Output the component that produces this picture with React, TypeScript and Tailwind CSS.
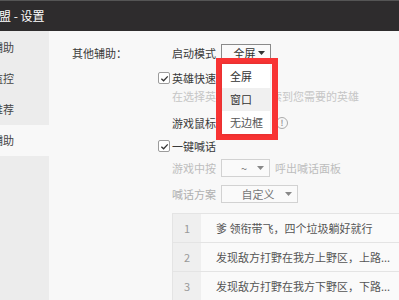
import React from 'react';

const font = { fontFamily: '"Noto Sans CJK SC", "Noto Sans", sans-serif' };

const navItems = [
  { label: '游戏辅助', active: false },
  { label: '战绩监控', active: false },
  { label: '英雄推荐', active: false },
  { label: '其他辅助', active: true },
];

const phrases = [
  '爹 领衔带飞，四个垃圾躺好就行',
  '发现敌方打野在我方上野区，上路...',
  '发现敌方打野在我方下野区，下路...',
];

function Check() {
  return (
    <span className="flex h-[12px] w-[12px] items-center justify-center rounded-[2px] border border-[#9c9c9c] bg-white">
      <svg width="9" height="9" viewBox="0 0 10 10">
        <path d="M1.5 5.2 L4 7.5 L8.6 2.6" fill="none" stroke="#333" strokeWidth="1.4" />
      </svg>
    </span>
  );
}

function Select({ value, width, strong }: { value: string; width: string; strong?: boolean }) {
  return (
    <div
      className={`flex h-[18px] items-center justify-between border bg-[#fafafa] pl-[9px] pr-[5px] ${width} ${
        strong ? 'border-[#8a8a8a] text-[#333]' : 'border-[#d2d2d2] text-[#777]'
      }`}
    >
      <span className="flex-1 text-center">{value}</span>
      <svg width="7" height="4" viewBox="0 0 7 4">
        <path d="M0 0 L7 0 L3.5 4 Z" fill={strong ? '#333' : '#888'} />
      </svg>
    </div>
  );
}

export default function App() {
  return (
    <div className="flex h-[300px] w-[399px] flex-col overflow-hidden text-[11px]" style={font}>
      <div className="flex h-[31px] shrink-0 items-center border-t border-[#555] bg-[#2e2c2d] text-[12px] text-white">
        <span className="ml-[-13px] whitespace-nowrap">联盟 - 设置</span>
      </div>

      <div className="flex flex-1">
        <div className="w-[49px] shrink-0 bg-[#ececec] pt-[1px]">
          {navItems.map((item) => (
            <div
              key={item.label}
              className={`flex h-[31px] items-center ${item.active ? 'bg-[#f8f8f8]' : ''}`}
            >
              <div className="flex w-[14px] justify-end whitespace-nowrap text-[#444]">{item.label}</div>
            </div>
          ))}
        </div>

        <div className="relative flex-1 bg-[#f8f8f8] text-[#3a3a3a]">
          <div className="flex pl-[23px] pt-[13px]">
            <div className="w-[86px] pt-[1px]">其他辅助：</div>
            <div className="flex flex-col">
              <div className="flex h-[18px] items-center gap-[5px] pl-[14px]">
                <span>启动模式</span>
                <Select value="全屏" width="w-[50px]" strong />
              </div>

              <div className="mt-[7px] flex h-[18px] items-center gap-[2px]">
                <Check />
                <span>英雄快速搜索</span>
              </div>
              <div className="flex h-[18px] items-center whitespace-nowrap pl-[14px] text-[#c6c6c6]">
                在选择英雄时可以搜索到您需要的英雄
              </div>

              <div className="mt-[9px] flex h-[18px] items-center pl-[14px]">
                <span>游戏鼠标锁定</span>
                <span className="ml-[38px] flex h-[12px] w-[12px] items-center justify-center rounded-full border border-[#aaa] text-[8px] font-bold leading-none text-[#999]">
                  !
                </span>
              </div>

              <div className="mt-[5px] flex h-[18px] items-center gap-[2px]">
                <Check />
                <span>一键喊话</span>
              </div>

              <div className="mt-[4px] flex h-[18px] items-center gap-[5px] whitespace-nowrap pl-[14px] text-[#bdbdbd]">
                <span>游戏中按</span>
                <Select value="~" width="w-[49px]" />
                <span>呼出喊话面板</span>
              </div>

              <div className="mt-[8px] flex h-[18px] items-center gap-[5px] pl-[14px] text-[#b0b0b0]">
                <span>喊话方案</span>
                <Select value="自定义" width="w-[77px]" />
              </div>
            </div>
          </div>

          <div className="ml-[123px] mt-[10px] w-[240px] border-t border-[#e4e4e4]">
            {phrases.map((p, i) => (
              <div key={i} className="flex h-[29px] border-b border-l border-[#e4e4e4]">
                <div className="flex w-[28px] items-center justify-center bg-[#efefef] text-[#999]">{i + 1}</div>
                <div className="flex flex-1 items-center whitespace-nowrap bg-[#fafafa] pl-[15px] text-[#555]">{p}</div>
              </div>
            ))}
          </div>

          <div className="absolute left-[167px] top-[27px] border-[6px] border-[#f83434] bg-white pr-[2px]">
            <div className="w-[48px] bg-white pt-[1px] shadow-[0_0_3px_rgba(0,0,0,0.15)]">
              <div className="flex h-[23px] items-center pl-[8px] text-[#333]">全屏</div>
              <div className="flex h-[23px] items-center bg-[#f0f0f0] pl-[8px] text-[#333]">窗口</div>
              <div className="flex h-[23px] items-center pl-[8px] text-[#555]">无边框</div>
            </div>
          </div>
        </div>
      </div>
    </div>
  );
}
